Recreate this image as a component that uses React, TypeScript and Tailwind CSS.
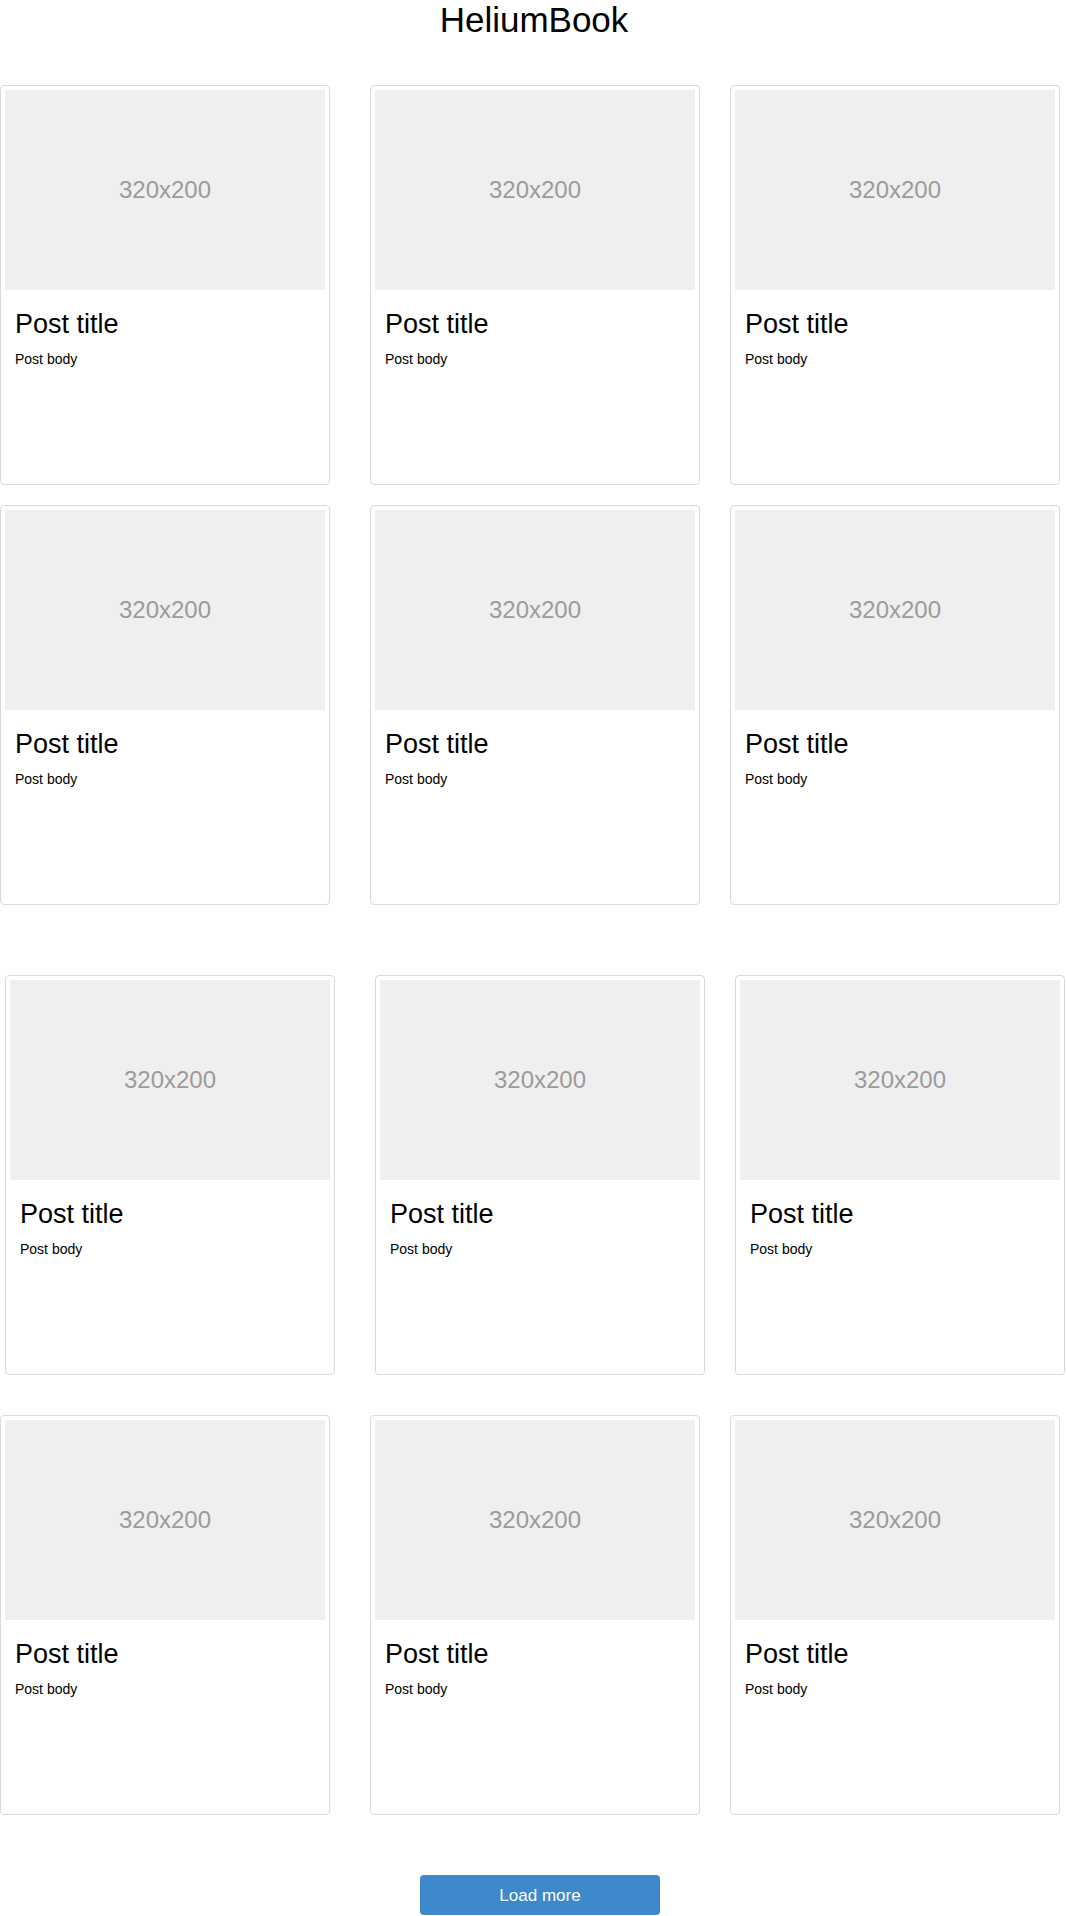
import React from "react";

function Card({ className = "" }: { className?: string }) {
  return (
    <div
      className={
        "w-[330px] h-[400px] shrink-0 rounded-[4px] border border-[#dadada] bg-white p-[4px] " +
        className
      }
    >
      <div className="flex h-[200px] w-[320px] items-center justify-center bg-[#efefef]">
        <span className="text-[24px] leading-none text-[#9b9b9b]">320x200</span>
      </div>
      <div className="px-[10px] pt-[19px]">
        <h2 className="text-[27px] leading-[1.15] text-black">Post title</h2>
        <p className="mt-[11px] text-[14px] leading-[1.15] text-black">Post body</p>
      </div>
    </div>
  );
}

function Row({ className = "" }: { className?: string }) {
  return (
    <div className={"flex " + className}>
      <Card />
      <Card className="ml-[40px]" />
      <Card className="ml-[30px]" />
    </div>
  );
}

export default function App() {
  return (
    <div
      className="min-h-[1916px] w-[1066px] bg-white text-black"
      style={{ fontFamily: '"Liberation Sans", Arial, Helvetica, sans-serif' }}
    >
      <h1 className="pl-[2px] text-center text-[35px] leading-[1.15] font-normal">HeliumBook</h1>

      <section className="mt-[45px] flex flex-col gap-[20px]">
        <Row />
        <Row />
      </section>

      <section className="mt-[70px] flex flex-col gap-[40px]">
        <Row className="pl-[5px]" />
        <Row />
      </section>

      <div className="mt-[60px] flex pl-[420px]">
        <button className="h-[40px] w-[240px] rounded-[4px] bg-[#3d89cb] text-[17px] text-white">
          Load more
        </button>
      </div>
    </div>
  );
}
